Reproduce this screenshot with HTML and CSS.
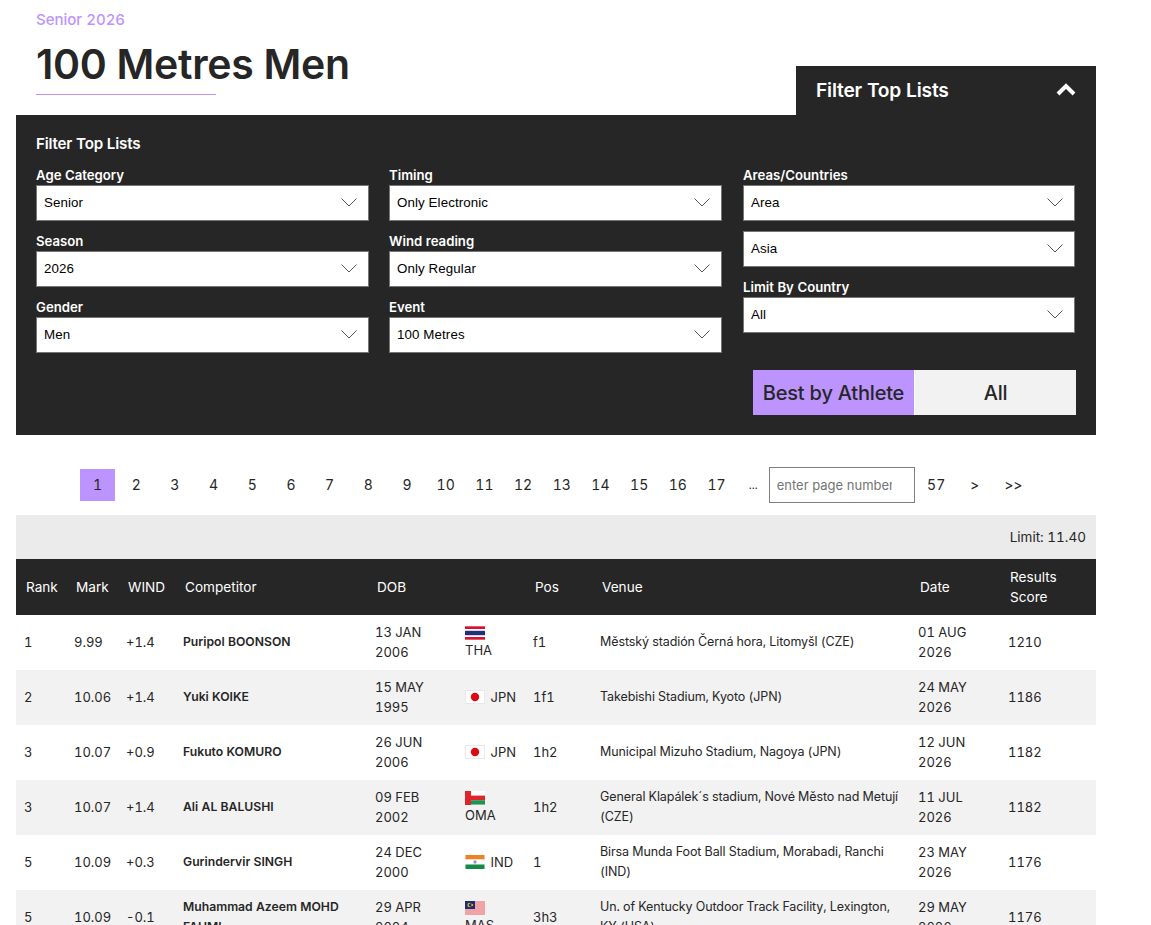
FILE: index.html
```html
<!DOCTYPE html>
<html lang="en">

<head>
    <meta charset="UTF-8">
    <meta name="viewport" content="width=device-width, initial-scale=1.0">
    <title>100 Metres Men</title>
    <link rel="stylesheet" href="styles.css">
</head>

<body>
    <svg class="defs" width="0" height="0">
        <symbol id="chev" viewBox="0 0 16 9"><path d="M0.5 0.5 8 8 15.5 0.5" fill="none" stroke="#555" stroke-width="1"/></symbol>
        <symbol id="tha" viewBox="0 0 20 14">
            <rect width="20" height="14" fill="#fff"/>
            <rect y="0.3" width="20" height="2.7" fill="#d8142c"/>
            <rect y="4.8" width="20" height="4.4" fill="#22307a"/>
            <rect y="11" width="20" height="2.7" fill="#d8142c"/>
        </symbol>
        <symbol id="jpn" viewBox="0 0 20 14">
            <rect x="0.5" y="0.5" width="19" height="13" fill="#fff" stroke="#e8e8e8"/>
            <circle cx="10" cy="7" r="4.2" fill="#dc0a14"/>
        </symbol>
        <symbol id="oma" viewBox="0 0 20 14">
            <rect width="20" height="14" fill="#fff"/>
            <rect y="4.6" width="20" height="4.6" fill="#e0242c"/>
            <rect y="9.2" width="20" height="4.4" fill="#1f9350"/>
            <rect width="6" height="14" fill="#e0242c"/>
        </symbol>
        <symbol id="ind" viewBox="0 0 20 14">
            <rect width="20" height="14" fill="#f5f5f5"/>
            <rect x="0.5" width="19" height="4.5" fill="#ee8120"/>
            <rect x="0.5" y="4.5" width="19" height="5" fill="#fff"/>
            <rect x="0.5" y="9.5" width="19" height="4.5" fill="#158a45"/>
            <circle cx="10" cy="7" r="1.7" fill="#8f9bc8"/>
        </symbol>
        <symbol id="mas" viewBox="0 0 20 14">
            <rect width="20" height="14" fill="#fff"/>
            <path d="M0 1h20M0 3h20M0 5h20M0 7h20M0 9h20M0 11h20M0 13h20" stroke="#e2474f" stroke-width="1"/>
            <rect width="10" height="8" fill="#1c2d78"/>
            <circle cx="4.6" cy="4" r="2.2" fill="#f6c700"/>
            <circle cx="5.4" cy="4" r="1.8" fill="#1c2d78"/>
            <circle cx="7.2" cy="4" r="1" fill="#f6c700"/>
        </symbol>
    </svg>

    <div class="page">
        <div class="head">
            <div class="head-text">
                <div class="sub">Senior 2026</div>
                <h1>100 Metres Men</h1>
                <div class="head-line"></div>
            </div>
            <div class="filter-tab">
                <span>Filter Top Lists</span>
                <svg class="tab-arrow" width="20" height="13" viewBox="0 0 20 13"><path d="M2 11 10 3 18 11" fill="none" stroke="#fff" stroke-width="4"/></svg>
            </div>
        </div>

        <div class="filter">
            <h2>Filter Top Lists</h2>
            <div class="filter-grid">
                <div class="filter-col">
                    <div class="field">
                        <label>Age Category</label>
                        <div class="select"><select><option>Senior</option></select><svg class="chev"><use href="#chev"/></svg></div>
                    </div>
                    <div class="field">
                        <label>Season</label>
                        <div class="select"><select><option>2026</option></select><svg class="chev"><use href="#chev"/></svg></div>
                    </div>
                    <div class="field">
                        <label>Gender</label>
                        <div class="select"><select><option>Men</option></select><svg class="chev"><use href="#chev"/></svg></div>
                    </div>
                </div>
                <div class="filter-col">
                    <div class="field">
                        <label>Timing</label>
                        <div class="select"><select><option>Only Electronic</option></select><svg class="chev"><use href="#chev"/></svg></div>
                    </div>
                    <div class="field">
                        <label>Wind reading</label>
                        <div class="select"><select><option>Only Regular</option></select><svg class="chev"><use href="#chev"/></svg></div>
                    </div>
                    <div class="field">
                        <label>Event</label>
                        <div class="select"><select><option>100 Metres</option></select><svg class="chev"><use href="#chev"/></svg></div>
                    </div>
                </div>
                <div class="filter-col area-col">
                    <div class="field">
                        <label>Areas/Countries</label>
                        <div class="select"><select><option>Area</option></select><svg class="chev"><use href="#chev"/></svg></div>
                    </div>
                    <div class="field">
                        <div class="select"><select><option>Asia</option></select><svg class="chev"><use href="#chev"/></svg></div>
                    </div>
                    <div class="field">
                        <label>Limit By Country</label>
                        <div class="select"><select><option>All</option></select><svg class="chev"><use href="#chev"/></svg></div>
                    </div>
                    <div class="toggle">
                        <button type="button" class="on">Best by Athlete</button>
                        <button type="button">All</button>
                    </div>
                </div>
            </div>
        </div>

        <div class="pager">
            <a class="current">1</a><a>2</a><a>3</a><a>4</a><a>5</a><a>6</a><a>7</a><a>8</a><a>9</a><a>10</a><a>11</a><a>12</a><a>13</a><a>14</a><a>15</a><a>16</a><a>17</a>
            <a class="dots">...</a>
            <input type="text" placeholder="enter page number">
            <a>57</a><a>&gt;</a><a>&gt;&gt;</a>
        </div>

        <div class="limit">Limit: 11.40</div>

        <table class="results">
            <colgroup>
                <col class="c-rank"><col class="c-mark"><col class="c-wind"><col class="c-name"><col class="c-dob">
                <col class="c-nat"><col class="c-pos"><col class="c-venue"><col class="c-date"><col class="c-score">
            </colgroup>
            <thead>
                <tr>
                    <th>Rank</th><th>Mark</th><th>WIND</th><th>Competitor</th><th>DOB</th><th></th><th>Pos</th><th>Venue</th><th>Date</th><th>Results Score</th>
                </tr>
            </thead>
            <tbody>
                <tr>
                    <td>1</td><td>9.99</td><td>+1.4</td><td class="name">Puripol BOONSON</td><td>13 JAN 2006</td>
                    <td class="nat"><svg class="flag"><use href="#tha"/></svg> THA</td><td>f1</td>
                    <td class="venue">Městský stadión Černá hora, Litomyšl (CZE)</td><td>01 AUG 2026</td><td>1210</td>
                </tr>
                <tr>
                    <td>2</td><td>10.06</td><td>+1.4</td><td class="name">Yuki KOIKE</td><td>15 MAY 1995</td>
                    <td class="nat"><svg class="flag"><use href="#jpn"/></svg> JPN</td><td>1f1</td>
                    <td class="venue">Takebishi Stadium, Kyoto (JPN)</td><td>24 MAY 2026</td><td>1186</td>
                </tr>
                <tr>
                    <td>3</td><td>10.07</td><td>+0.9</td><td class="name">Fukuto KOMURO</td><td>26 JUN 2006</td>
                    <td class="nat"><svg class="flag"><use href="#jpn"/></svg> JPN</td><td>1h2</td>
                    <td class="venue">Municipal Mizuho Stadium, Nagoya (JPN)</td><td>12 JUN 2026</td><td>1182</td>
                </tr>
                <tr>
                    <td>3</td><td>10.07</td><td>+1.4</td><td class="name">Ali AL BALUSHI</td><td>09 FEB 2002</td>
                    <td class="nat"><svg class="flag"><use href="#oma"/></svg> OMA</td><td>1h2</td>
                    <td class="venue">General Klapálek´s stadium, Nové Město nad Metují (CZE)</td><td>11 JUL 2026</td><td>1182</td>
                </tr>
                <tr>
                    <td>5</td><td>10.09</td><td>+0.3</td><td class="name">Gurindervir SINGH</td><td>24 DEC 2000</td>
                    <td class="nat"><svg class="flag"><use href="#ind"/></svg> IND</td><td>1</td>
                    <td class="venue">Birsa Munda Foot Ball Stadium, Morabadi, Ranchi (IND)</td><td>23 MAY 2026</td><td>1176</td>
                </tr>
                <tr>
                    <td>5</td><td>10.09</td><td>-0.1</td><td class="name">Muhammad Azeem MOHD FAHMI</td><td>29 APR 2004</td>
                    <td class="nat"><svg class="flag"><use href="#mas"/></svg> MAS</td><td>3h3</td>
                    <td class="venue">Un. of Kentucky Outdoor Track Facility, Lexington, KY (USA)</td><td>29 MAY 2026</td><td>1176</td>
                </tr>
            </tbody>
        </table>
    </div>
</body>

</html>
```

FILE: styles.css
```css
* {
    margin: 0;
    padding: 0;
    box-sizing: border-box;
}

html,
body {
    height: 100%;
    overflow: hidden;
}

body {
    background: #fff;
    color: #262626;
    font-family: Inter, "Liberation Sans", sans-serif;
    font-variant-numeric: tabular-nums;
}

.defs {
    position: absolute;
}

.page {
    width: 1080px;
    margin-left: 16px;
}

.head {
    display: flex;
    justify-content: space-between;
    align-items: flex-end;
    height: 115px;
}

.head-text {
    padding: 10px 0 20px 20px;
}

.sub {
    color: #bd94ff;
    font-size: 15px;
    font-weight: 500;
    line-height: 19px;
}

h1 {
    font-size: 41px;
    font-weight: 600;
    font-variant-numeric: normal;
    letter-spacing: -0.3px;
    line-height: 50px;
    margin-top: 10px;
}

.head-line {
    width: 180px;
    height: 1px;
    background: #bd94ff;
    margin-top: 5px;
}

.filter-tab {
    display: flex;
    justify-content: space-between;
    align-items: center;
    width: 300px;
    height: 49px;
    padding: 0 20px 2px;
    background: #262626;
    color: #fff;
    font-size: 19.2px;
    font-weight: 600;
    letter-spacing: -0.2px;
}

.filter {
    height: 320px;
    padding: 19px 20px 0;
    background: #262626;
    color: #fff;
}

.filter h2 {
    font-size: 15.2px;
    font-weight: 600;
    letter-spacing: -0.2px;
    line-height: 20px;
    margin-bottom: 11px;
}

.filter-grid {
    display: grid;
    grid-template-columns: 333px 333px 333px;
    column-gap: 20px;
}

.area-col {
    padding-left: 1px;
}

.area-col .field {
    width: 332px;
}

.field {
    margin-bottom: 10px;
}

.field label {
    display: block;
    padding-top: 1px;
    font-size: 13.2px;
    font-weight: 600;
    line-height: 18px;
    margin-bottom: 1px;
}

.select {
    position: relative;
    height: 36px;
}

.select select {
    display: block;
    width: 100%;
    height: 36px;
    padding: 0 0 2px 7px;
    appearance: none;
    border: 1px solid #767676;
    border-radius: 0;
    background: #fff;
    color: #000;
    font-family: "Liberation Sans", Arial, sans-serif;
    font-size: 13.33px;
    letter-spacing: 0.1px;
}

.chev {
    position: absolute;
    right: 12px;
    top: 13px;
    width: 16px;
    height: 9px;
    pointer-events: none;
}

.toggle {
    display: flex;
    width: 323px;
    margin: 37px 0 0 10px;
}

.toggle button {
    flex: 1;
    height: 45px;
    border: none;
    background: #f2f2f2;
    color: #262626;
    font-family: Inter, "Liberation Sans", sans-serif;
    font-size: 20px;
    font-weight: 500;
    letter-spacing: -0.2px;
}

.toggle .on {
    background: #bd94ff;
    border-right: 1px solid #fff;
}

.pager {
    display: flex;
    align-items: center;
    height: 36px;
    margin-top: 32px;
    padding-left: 64px;
    font-size: 14px;
    color: #262626;
}

.pager a {
    width: 35px;
    height: 32px;
    margin-right: 3.7px;
    line-height: 32px;
    text-align: center;
}

.pager .current {
    background: #bd94ff;
}

.pager .dots {
    width: 31px;
    margin-right: 0;
    font-size: 11px;
}

.pager input {
    width: 146px;
    height: 36px;
    padding: 0 22px 0 7px;
    margin-right: 4px;
    border: 1px solid #808080;
    font-family: Inter, "Liberation Sans", sans-serif;
    font-size: 13px;
}

.limit {
    height: 44px;
    margin-top: 12px;
    padding: 14px 10px 0 0;
    background: #ebebeb;
    font-size: 13.5px;
    line-height: 17px;
    text-align: right;
}

.results {
    width: 1080px;
    table-layout: fixed;
    border-collapse: collapse;
    font-size: 13px;
    line-height: 20px;
}

.c-rank { width: 50px; }
.c-mark { width: 52px; }
.c-wind { width: 57px; }
.c-name { width: 192px; }
.c-dob { width: 90px; }
.c-nat { width: 68px; }
.c-pos { width: 67px; }
.c-venue { width: 318px; }
.c-date { width: 90px; }
.c-score { width: 96px; }

.results th {
    height: 56px;
    padding: 0 8px 0 10px;
    background: #262626;
    color: #fff;
    font-size: 13.6px;
    font-weight: 400;
    text-align: left;
}

.results td {
    height: 55px;
    padding: 0 8px 1px;
    vertical-align: middle;
}

.results tbody tr:nth-child(even) td {
    background: #f2f2f2;
}

.results .name {
    font-size: 12.2px;
    font-weight: 600;
}

.results .venue {
    font-size: 12.5px;
    letter-spacing: -0.1px;
}

.results .nat {
    line-height: 17px;
}

.flag {
    width: 20px;
    height: 14px;
    margin-right: 2px;
    vertical-align: -2px;
}
```
